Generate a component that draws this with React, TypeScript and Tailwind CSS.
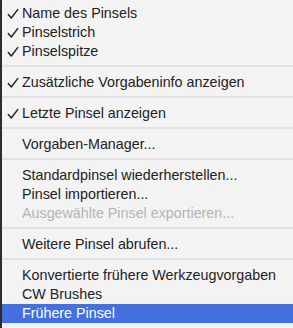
const Check = () => (
  <svg width="12" height="12" viewBox="0 0 12 12" className="absolute left-[5px] top-[4px]">
    <path d="M1.3 6.6 L4.3 10 L10.7 1.6" fill="none" stroke="#262626" strokeWidth="1.5" strokeLinecap="round" strokeLinejoin="round" />
  </svg>
);

type Item = { label: string; checked?: boolean; disabled?: boolean; active?: boolean };

const groups: Item[][] = [
  [
    { label: "Name des Pinsels", checked: true },
    { label: "Pinselstrich", checked: true },
    { label: "Pinselspitze", checked: true },
  ],
  [{ label: "Zusätzliche Vorgabeninfo anzeigen", checked: true }],
  [{ label: "Letzte Pinsel anzeigen", checked: true }],
  [{ label: "Vorgaben-Manager..." }],
  [
    { label: "Standardpinsel wiederherstellen..." },
    { label: "Pinsel importieren..." },
    { label: "Ausgewählte Pinsel exportieren...", disabled: true },
  ],
  [{ label: "Weitere Pinsel abrufen..." }],
  [
    { label: "Konvertierte frühere Werkzeugvorgaben" },
    { label: "CW Brushes" },
    { label: "Frühere Pinsel", active: true },
  ],
];

const Row = ({ item }: { item: Item }) => (
  <div
    className={`relative h-[19px] pl-[20px] leading-[19px] whitespace-nowrap ${
      item.active ? "bg-[#4470df] text-white" : item.disabled ? "text-[#b3b3b3]" : "text-[#222222]"
    }`}
  >
    {item.checked && <Check />}
    {item.label}
  </div>
);

export default function App() {
  return (
    <div className="w-[293px] h-[328px] overflow-hidden bg-[#f3f3f3] border-l-2 border-[#2b2b2b] pt-[4px] text-[14.3px] font-['Liberation_Sans',Arial,sans-serif]">
      {groups.map((g, i) => (
        <div key={i}>
          {i > 0 && <div className="mt-[4px] mb-[6px] h-[2px] bg-[#e2e2e2]" />}
          {g.map((it) => (
            <Row key={it.label} item={it} />
          ))}
        </div>
      ))}
    </div>
  );
}
